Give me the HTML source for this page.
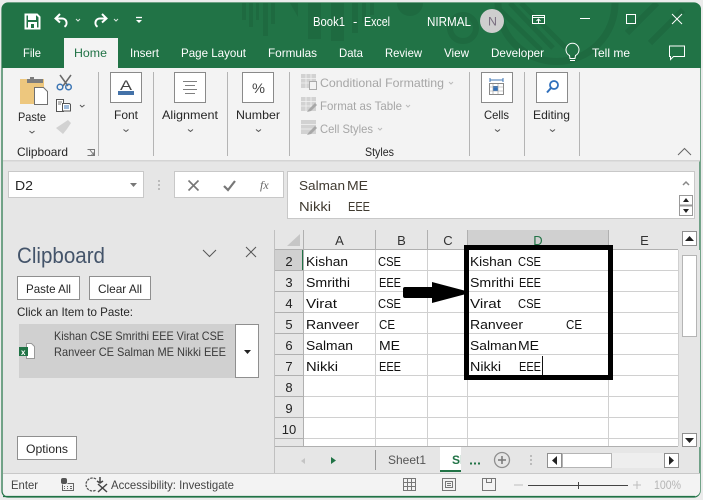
<!DOCTYPE html>
<html><head><meta charset="utf-8"><title>Book1 - Excel</title>
<style>
html,body{margin:0;padding:0;background:#e8e8e8;width:703px;height:500px;overflow:hidden}
svg{display:block}
text{font-family:"Liberation Sans",sans-serif;font-size:12px;fill:#262626;white-space:pre}
.w{fill:#fff}
.c{font-size:13px;fill:#111}
.g{fill:#a6a6a6}
.r{font-size:13px;fill:#222;text-anchor:middle}
.h{font-size:13px;fill:#333;text-anchor:middle}
</style></head><body>
<svg width="703" height="500" viewBox="0 0 703 500" xmlns="http://www.w3.org/2000/svg">
<defs>
<clipPath id="tb"><path d="M2 68V9a6 6 0 0 1 6-6H695a6 6 0 0 1 6 6V68Z"/></clipPath>
<clipPath id="st"><rect x="440" y="447" width="21" height="23"/></clipPath>
<clipPath id="gr"><rect x="275" y="230" width="404" height="216"/></clipPath>
</defs>
<rect width="703" height="500" fill="#ececec"/>
<!-- window -->
<rect x="2" y="3" width="698" height="494" rx="6" fill="#e6e6e6" stroke="#217346" stroke-width="1.2"/>
<path d="M2 68V9a6 6 0 0 1 6-6H695a6 6 0 0 1 6 6V68Z" fill="#217346"/>
<!-- title decoration -->
<g clip-path="url(#tb)">
<g fill="#1e6a40">
<rect x="242" y="3" width="4" height="17"/><rect x="249" y="3" width="4" height="24"/><rect x="256" y="3" width="3" height="17"/><rect x="263" y="3" width="5" height="33"/><rect x="271" y="3" width="4" height="21"/>
<path d="M290 3h8v14z"/><rect x="308" y="3" width="13" height="36"/><rect x="331" y="3" width="13" height="38"/><rect x="352" y="3" width="6" height="30"/><rect x="362" y="3" width="4" height="20"/><rect x="370" y="3" width="4" height="12"/>
<path d="M397 3h26a13 13 0 0 1-26 0z"/>
</g>
<g fill="none" stroke="#1e6a40">
<circle cx="463" cy="28" r="13" stroke-width="6"/>
<path d="M498 3A58 58 0 0 0 615 3" stroke-width="7"/>
<path d="M510 3L553 48M521 3L566 48M498 8L541 50" stroke-width="5"/>
<path d="M657 3L627 33M683 10L650 43" stroke-width="6"/>
</g>
</g>
<!-- QAT -->
<path d="M25.500 14.500H37L39.500 17V28.500H25.500Z" fill="none" stroke="#fff" stroke-width="2"/>
<rect x="28" y="15" width="8" height="5" fill="#fff"/><rect x="28" y="22" width="9" height="6" fill="#fff"/><rect x="31" y="24" width="3" height="4" fill="#217346"/>
<g fill="none" stroke="#fff" stroke-width="2">
<path d="M60 14L55.500 18.500L60 22.500M56 18.500H62a4.500 4.500 0 0 1 2.500 8.300"/>
<path d="M102 14L106.500 18.500L102 22.500M106 18.500H100a4.500 4.500 0 0 0-2.500 8.300"/>
</g>
<g fill="none" stroke="#d9e6de" stroke-width="1"><path d="M76 19l2 2 2-2M114 19l2 2 2-2"/></g>
<path d="M136 17.500h6" stroke="#fff" stroke-width="1.300"/><path d="M136 20h6l-3 3z" fill="#fff"/>
<!-- title text -->
<text class="w" x="313" y="26" textLength="32" lengthAdjust="spacingAndGlyphs" style="font-size:13px">Book1</text>
<text class="w" x="353" y="26" style="font-size:13px">-</text>
<text class="w" x="364" y="26" textLength="26" lengthAdjust="spacingAndGlyphs" style="font-size:13px">Excel</text>
<text class="w" x="427" y="26" textLength="44" lengthAdjust="spacingAndGlyphs" style="font-size:13px">NIRMAL</text>
<circle cx="492" cy="21" r="12" fill="#cecece"/>
<text x="488" y="25.500" textLength="9" lengthAdjust="spacingAndGlyphs" style="font-size:12px;fill:#7a6f80">N</text>
<g fill="none" stroke="#fff">
<rect x="532.500" y="15.500" width="12" height="8"/><path d="M532 17.500h13M538.500 23v-4M536.500 21l2-2 2 2"/>
<path d="M580 18.500h10"/><rect x="626.500" y="14.500" width="9" height="9"/><path d="M672 14l10 10M682 14l-10 10"/>
</g>
<!-- Tabs -->
<rect x="64" y="38" width="54" height="30" fill="#f3f3f3"/>
<g>
<text class="w" x="23" y="57" textLength="18" lengthAdjust="spacingAndGlyphs">File</text>
<text x="74" y="57" textLength="33" lengthAdjust="spacingAndGlyphs" style="fill:#217346">Home</text>
<text class="w" x="130" y="57" textLength="29" lengthAdjust="spacingAndGlyphs">Insert</text>
<text class="w" x="181" y="57" textLength="65" lengthAdjust="spacingAndGlyphs">Page Layout</text>
<text class="w" x="268" y="57" textLength="49" lengthAdjust="spacingAndGlyphs">Formulas</text>
<text class="w" x="339" y="57" textLength="24" lengthAdjust="spacingAndGlyphs">Data</text>
<text class="w" x="385" y="57" textLength="37" lengthAdjust="spacingAndGlyphs">Review</text>
<text class="w" x="444" y="57" textLength="25" lengthAdjust="spacingAndGlyphs">View</text>
<text class="w" x="491" y="57" textLength="53" lengthAdjust="spacingAndGlyphs">Developer</text>
<text class="w" x="592" y="57" textLength="38" lengthAdjust="spacingAndGlyphs">Tell me</text>
</g>
<g fill="none" stroke="#fff"><path d="M569.500 55.500a6.500 6.500 0 1 1 6 0l-.500 3h-5zM570 60.500h5"/><path d="M669.500 46h15v10.500h-11l-3 3v-3h-1z"/></g>
<!-- Ribbon -->
<rect x="3" y="68" width="697" height="92" fill="#f3f3f3"/>
<rect x="3" y="160" width="697" height="1.500" fill="#d4d4d4"/>
<g fill="#b4b4b4"><rect x="98" y="72" width="1" height="84"/><rect x="153" y="72" width="1" height="84"/><rect x="227" y="72" width="1" height="84"/><rect x="289" y="72" width="1" height="84"/><rect x="469" y="72" width="1" height="84"/><rect x="524" y="72" width="1" height="84"/><rect x="579" y="72" width="1" height="84"/></g>
<!-- Paste icon -->
<path d="M20 79h24v25H20z" fill="#edc77e"/><path d="M27 79h3v-2h4v2h9v4H27z" fill="#7d7d7d"/>
<path d="M34.500 87.500h9l4 4v13h-13z" fill="#fff" stroke="#707070"/>
<g fill="none" stroke="#6a6a6a" stroke-width="1.500"><path d="M60 75l8 11M71 75l-8 11"/></g>
<g fill="none" stroke="#3d76b4" stroke-width="1.500"><circle cx="60" cy="87" r="2.800"/><circle cx="68.500" cy="87" r="2.800"/></g>
<path d="M56.500 99.500h7v12h-7z" fill="#fff" stroke="#555"/><path d="M62.500 103.500h7l1 1v6.500h-8z" fill="#fff" stroke="#555"/><path d="M64 106h5M64 108h5" stroke="#3d76b4"/><path d="M58 102h4M58 104h3" stroke="#777"/>
<path d="M56 128l6-4 5 5-4 5zM62 124l6-4 3 3-4 6z" fill="#d2d2d2"/>
<text x="18" y="121" textLength="28" lengthAdjust="spacingAndGlyphs">Paste</text>
<g fill="none" stroke="#555"><path d="M29.500 131l2.500 2 2.500-2M80 105l2 2 2.500-2M123.500 129.500l2.500 2 2.500-2M188 129.500l2.500 2 2.500-2M256 129.500l2.500 2 2.500-2M495 129.500l2.500 2 2.500-2M550 129.500l2.500 2 2.500-2"/></g>
<text x="17" y="156" textLength="51" lengthAdjust="spacingAndGlyphs">Clipboard</text>
<path d="M87.500 149.500h7v6h-7M90 150l4 5M94 152v3h-3" fill="none" stroke="#777"/>
<!-- group boxes -->
<g fill="#fff" stroke="#8a8a8a"><rect x="110.500" y="72.500" width="31" height="30"/><rect x="174.500" y="72.500" width="31" height="30"/><rect x="242.500" y="72.500" width="31" height="30"/><rect x="481.500" y="72.500" width="31" height="30"/><rect x="536.500" y="72.500" width="31" height="30"/></g>
<text x="120" y="90" textLength="12" lengthAdjust="spacingAndGlyphs" style="font-size:14px;fill:#444">A</text><rect x="118" y="91" width="16" height="4" fill="#4472a8"/>
<path d="M183 81.500h14M185 85.500h10M183 89.500h14M185 93.500h10" stroke="#555" stroke-width=".8"/>
<text x="252" y="93" textLength="13" lengthAdjust="spacingAndGlyphs" style="font-size:14px;fill:#444">%</text>
<path d="M490 80h13M490 78v4M503 78v4" stroke="#3d76b4"/><rect x="489.500" y="83.500" width="14" height="11" fill="#fff" stroke="#888"/><rect x="493" y="86" width="5" height="5" fill="#2f6fbb"/><path d="M489 87h15M489 91h15M493 84v10M498 84v10" stroke="#999" stroke-width=".6"/>
<circle cx="554" cy="85" r="4" fill="none" stroke="#2f6fbb" stroke-width="1.800"/><path d="M551 88l-4 4.500" stroke="#2f6fbb" stroke-width="2"/>
<text x="114" y="119" textLength="24" lengthAdjust="spacingAndGlyphs">Font</text>
<text x="162" y="119" textLength="56" lengthAdjust="spacingAndGlyphs">Alignment</text>
<text x="236" y="119" textLength="44" lengthAdjust="spacingAndGlyphs">Number</text>
<text x="484" y="119" textLength="25" lengthAdjust="spacingAndGlyphs">Cells</text>
<text x="533" y="119" textLength="37" lengthAdjust="spacingAndGlyphs">Editing</text>
<!-- styles -->
<g fill="#d2d2d2"><rect x="301" y="74" width="15" height="14"/><rect x="301" y="97" width="15" height="14"/><rect x="301" y="120" width="15" height="14"/></g>
<path d="M301 78.500h15M301 83h15M306 74v14M311 74v14M301 101.500h15M301 106h15M306 97v14M311 97v14M301 124.500h15M301 129h15" stroke="#f3f3f3" stroke-width=".8"/>
<rect x="309.500" y="81.500" width="7" height="8" fill="#f3f3f3" stroke="#aaa"/>
<path d="M307 112l2-3 6-6 2 2-6 6zM307 135l2-3 6-6 2 2-6 6z" fill="#a8a8a8"/>
<text class="g" x="320" y="87" textLength="124" lengthAdjust="spacingAndGlyphs">Conditional Formatting</text>
<text class="g" x="320" y="110" textLength="82" lengthAdjust="spacingAndGlyphs">Format as Table</text>
<text class="g" x="320" y="133" textLength="53" lengthAdjust="spacingAndGlyphs">Cell Styles</text>
<path d="M449 82l2 2 2-2M406 105l2 2 2-2M378 128l2 2 2-2" fill="none" stroke="#bbb"/>
<text x="365" y="156" textLength="29" lengthAdjust="spacingAndGlyphs">Styles</text>
<path d="M678 155l6.500-6.500 6.500 6.500" fill="none" stroke="#666"/>
<!-- formula bar -->
<g fill="#fff" stroke="#c8c8c8"><rect x="8.500" y="171.500" width="135" height="26"/><rect x="174.500" y="171.500" width="109" height="26"/><rect x="287.500" y="171.500" width="407" height="47"/></g>
<text x="15" y="190" textLength="18" lengthAdjust="spacingAndGlyphs" style="font-size:13px">D2</text>
<path d="M130 183h7l-3.500 4z" fill="#777"/>
<path d="M159 180v2M159 184v2M159 188v2" stroke="#bbb" stroke-width="2"/>
<path d="M188.500 180.500l10 10M198.500 180.500l-10 10" stroke="#777" stroke-width="1.600"/>
<path d="M224 186l4 4 7-9" fill="none" stroke="#777" stroke-width="2.200"/>
<text x="260" y="189" style="font-family:'Liberation Serif',serif;font-style:italic;font-size:12px;fill:#666">fx</text>
<text class="c" x="299" y="190" textLength="46" lengthAdjust="spacingAndGlyphs" style="fill:#403a30">Salman</text><text class="c" x="347" y="190" textLength="21" lengthAdjust="spacingAndGlyphs" style="fill:#403a30">ME</text>
<text class="c" x="299" y="211" textLength="32" lengthAdjust="spacingAndGlyphs" style="fill:#403a30">Nikki</text><text class="c" x="348" y="211" textLength="22" lengthAdjust="spacingAndGlyphs" style="fill:#403a30">EEE</text>
<path d="M683 185l3-3 3 3" fill="none" stroke="#888" stroke-width="1.500"/>
<g fill="#fff" stroke="#999"><rect x="679.500" y="195.500" width="13" height="9.500"/><rect x="679.500" y="206" width="13" height="9.500"/></g>
<path d="M683 202h6l-3-4zM683 209h6l-3 4z" fill="#222"/>
<!-- clipboard pane -->
<text x="17" y="263" textLength="88" lengthAdjust="spacingAndGlyphs" style="font-size:22px;fill:#44546a">Clipboard</text>
<path d="M203 250l6.500 6.500 6.500-6.500M246 247l10 10M256 247l-10 10" fill="none" stroke="#555"/>
<g fill="#fff" stroke="#8f8f8f"><rect x="17.500" y="276.500" width="62" height="23"/><rect x="89.500" y="276.500" width="61" height="23"/><rect x="17.500" y="436.500" width="59" height="23"/></g>
<text x="26" y="293" textLength="45" lengthAdjust="spacingAndGlyphs">Paste All</text>
<text x="98" y="293" textLength="44" lengthAdjust="spacingAndGlyphs">Clear All</text>
<text x="17" y="316" textLength="116" lengthAdjust="spacingAndGlyphs">Click an Item to Paste:</text>
<text x="26" y="453" textLength="42" lengthAdjust="spacingAndGlyphs">Options</text>
<rect x="19" y="324" width="216" height="54" fill="#d0d0d0"/>
<rect x="235.500" y="324.500" width="23" height="53" fill="#fff" stroke="#8f8f8f"/>
<path d="M244 350h7l-3.500 4z" fill="#222"/>
<text x="54" y="340" textLength="170" lengthAdjust="spacingAndGlyphs" style="fill:#3a3a3a">Kishan CSE Smrithi EEE Virat CSE</text>
<text x="54" y="356" textLength="172" lengthAdjust="spacingAndGlyphs" style="fill:#3a3a3a">Ranveer CE Salman ME Nikki EEE</text>
<path d="M26.500 343.500h5l3 3v12h-8z" fill="#fff" stroke="#999"/><rect x="19" y="347" width="9" height="9" fill="#217346"/>
<text x="21" y="355" style="font-size:8px;font-weight:bold;fill:#fff">x</text>
<!-- pane border -->
<rect x="274" y="230" width="1" height="243" fill="#c0c0c0"/>
<!-- Grid -->
<rect x="304" y="250" width="374" height="196" fill="#fff"/>
<rect x="467" y="230" width="141" height="20" fill="#d0d0d0"/>
<rect x="275" y="250" width="28" height="21" fill="#d0d0d0"/>
<rect x="302" y="250" width="2" height="21" fill="#217346"/>
<path d="M287 246h13v-12z" fill="#c6c6c6"/>
<g stroke="#d0d0d0" fill="none">
<path d="M304 270.500H678M304 291.500H678M304 312.500H678M304 333.500H678M304 354.500H678M304 375.500H678M304 396.500H678M304 417.500H678M304 438.500H678"/>
<path d="M375.500 250V446M427.500 250V446M467.500 250V446M608.500 250V446M678.500 250V446"/>
</g>
<g stroke="#b0b0b0" fill="none">
<path d="M275 270.500H303M275 291.500H303M275 312.500H303M275 333.500H303M275 354.500H303M275 375.500H303M275 396.500H303M275 417.500H303M275 438.500H303"/>
<path d="M303.500 230V446M375.500 230V250M427.500 230V250M467.500 230V250M608.500 230V250M275 249.500H678M275 446.500H678"/>
</g>
<text class="h" x="339.500" y="245">A</text><text class="h" x="401.500" y="245">B</text><text class="h" x="448" y="245">C</text><text class="h" x="538" y="245" style="fill:#217346">D</text><text class="h" x="644.500" y="245">E</text>
<text class="r" x="289" y="266">2</text><text class="r" x="289" y="287">3</text><text class="r" x="289" y="308">4</text><text class="r" x="289" y="329">5</text><text class="r" x="289" y="350">6</text><text class="r" x="289" y="371">7</text><text class="r" x="289" y="392">8</text><text class="r" x="289" y="413">9</text><text class="r" x="289" y="434">10</text>
<text class="r" x="289" y="455" clip-path="url(#gr)">11</text>
<!-- cells -->
<text class="c" x="306" y="266" textLength="42" lengthAdjust="spacingAndGlyphs">Kishan</text>
<text class="c" x="306" y="287" textLength="44" lengthAdjust="spacingAndGlyphs">Smrithi</text>
<text class="c" x="306" y="308" textLength="31" lengthAdjust="spacingAndGlyphs">Virat</text>
<text class="c" x="306" y="329" textLength="53" lengthAdjust="spacingAndGlyphs">Ranveer</text>
<text class="c" x="306" y="350" textLength="47" lengthAdjust="spacingAndGlyphs">Salman</text>
<text class="c" x="306" y="371" textLength="32" lengthAdjust="spacingAndGlyphs">Nikki</text>
<text class="c" x="378" y="266" textLength="23" lengthAdjust="spacingAndGlyphs">CSE</text>
<text class="c" x="379" y="287" textLength="22" lengthAdjust="spacingAndGlyphs">EEE</text>
<text class="c" x="378" y="308" textLength="23" lengthAdjust="spacingAndGlyphs">CSE</text>
<text class="c" x="379" y="329" textLength="16" lengthAdjust="spacingAndGlyphs">CE</text>
<text class="c" x="379" y="350" textLength="21" lengthAdjust="spacingAndGlyphs">ME</text>
<text class="c" x="379" y="371" textLength="22" lengthAdjust="spacingAndGlyphs">EEE</text>
<text class="c" x="470" y="266" textLength="42" lengthAdjust="spacingAndGlyphs">Kishan</text>
<text class="c" x="518" y="266" textLength="23" lengthAdjust="spacingAndGlyphs">CSE</text>
<text class="c" x="470" y="287" textLength="44" lengthAdjust="spacingAndGlyphs">Smrithi</text>
<text class="c" x="519" y="287" textLength="22" lengthAdjust="spacingAndGlyphs">EEE</text>
<text class="c" x="470" y="308" textLength="31" lengthAdjust="spacingAndGlyphs">Virat</text>
<text class="c" x="518" y="308" textLength="23" lengthAdjust="spacingAndGlyphs">CSE</text>
<text class="c" x="470" y="329" textLength="53" lengthAdjust="spacingAndGlyphs">Ranveer</text>
<text class="c" x="566" y="329" textLength="16" lengthAdjust="spacingAndGlyphs">CE</text>
<text class="c" x="470" y="350" textLength="47" lengthAdjust="spacingAndGlyphs">Salman</text>
<text class="c" x="518" y="350" textLength="21" lengthAdjust="spacingAndGlyphs">ME</text>
<text class="c" x="470" y="371" textLength="31" lengthAdjust="spacingAndGlyphs">Nikki</text>
<text class="c" x="519" y="371" textLength="22" lengthAdjust="spacingAndGlyphs">EEE</text>
<rect x="542" y="356" width="1" height="19" fill="#111"/>
<!-- annotations -->
<rect x="466.500" y="247.500" width="144" height="130" fill="none" stroke="#000" stroke-width="5"/>
<path d="M405 287H432V282L466 291V294L432 303V298H405Q403 298 403 296V289Q403 287 405 287Z" fill="#000"/>
<!-- vertical scrollbar -->
<rect x="679" y="250" width="21" height="197" fill="#e6e6e6"/>
<g fill="#fff" stroke="#8f8f8f"><rect x="682.500" y="231.500" width="14" height="14"/><rect x="682.500" y="433.500" width="14" height="13"/></g>
<rect x="682.500" y="255.500" width="14" height="81" fill="#fff" stroke="#b5b5b5"/>
<path d="M685 241h9l-4.500-5zM685 438h9l-4.500 5z" fill="#222"/>
<!-- sheet tabs -->
<path d="M375.500 450V470" stroke="#999"/>
<path d="M305 458v6l-4-3z" fill="#c4c4c4"/><path d="M331 457v7l5-3.500z" fill="#217346"/>
<text x="388" y="464" textLength="38" lengthAdjust="spacingAndGlyphs" style="fill:#555">Sheet1</text>
<rect x="440" y="447" width="21" height="23" fill="#fff"/><rect x="440" y="470" width="21" height="2" fill="#217346"/>
<text x="452" y="464" clip-path="url(#st)" style="font-weight:bold;fill:#217346">Sh</text>
<path d="M470 463.500h2M474 463.500h2M478 463.500h2" stroke="#217346" stroke-width="2"/>
<circle cx="502" cy="460" r="7.500" fill="none" stroke="#8f8f8f" stroke-width="1.300"/><path d="M498 460h8M502 456v8" stroke="#777" stroke-width="1.500"/>
<path d="M531 455v2M531 459v2M531 463v2" stroke="#bbb" stroke-width="2"/>
<rect x="547" y="453" width="132" height="15" fill="#eeeeee"/>
<g fill="#fff" stroke="#8f8f8f"><rect x="547.500" y="453.500" width="14" height="14"/><rect x="664.500" y="453.500" width="14" height="14"/></g>
<rect x="562.500" y="453.500" width="49" height="14" fill="#fff" stroke="#b5b5b5"/>
<path d="M557 456v9l-5-4.500zM669 456v9l5-4.500z" fill="#222"/>
<!-- status bar -->
<path d="M3 474H700V491a5 5 0 0 1-5 5H8a5 5 0 0 1-5-5Z" fill="#f3f3f3"/>
<rect x="3" y="473" width="697" height="1" fill="#c8c8c8"/>
<path d="M3 496.500H695" stroke="#217346" stroke-width="1.200"/>
<text x="11" y="489" textLength="27" lengthAdjust="spacingAndGlyphs" style="fill:#444">Enter</text>
<rect x="61" y="478" width="6" height="6" rx="2" fill="#555"/><path d="M62.500 484.500v6h11v-7h-6" fill="none" stroke="#666"/><path d="M64 486.500h1M67 486.500h1M70 486.500h2M64 488.500h1M67 488.500h1M70 488.500h2" stroke="#666"/>
<path d="M96 479a6.500 6.500 0 1 0 0 11" fill="none" stroke="#555" stroke-dasharray="2.500 1" stroke-width="1.300"/><path d="M100 477v6M97 481l3 2 3-2M98 484l9 8M107 484l-9 8" fill="none" stroke="#444" stroke-width="1.500"/>
<text x="111" y="489" textLength="123" lengthAdjust="spacingAndGlyphs" style="fill:#444">Accessibility: Investigate</text>
<g fill="none" stroke="#777">
<rect x="403.500" y="478.500" width="12" height="12"/><path d="M407.500 478v13M411.500 478v13M403 482.500h13M403 486.500h13"/>
<rect x="442.500" y="478.500" width="13" height="12"/><path d="M445.500 481.500h7v6h-7zM447 483.500h4M447 485.500h4"/>
<path d="M482.500 478.500h13v12h-13zM486.500 478.500v4h5v-4"/>
</g>
<path d="M514 485h9M633 485h8M637 481v8" stroke="#bdbdbd"/>
<path d="M528 485.500h100" stroke="#444"/><path d="M578.500 482v7" stroke="#444"/>
<text x="654" y="489" textLength="27" lengthAdjust="spacingAndGlyphs" style="fill:#b5b5b5">100%</text>
</svg>
</body></html>
